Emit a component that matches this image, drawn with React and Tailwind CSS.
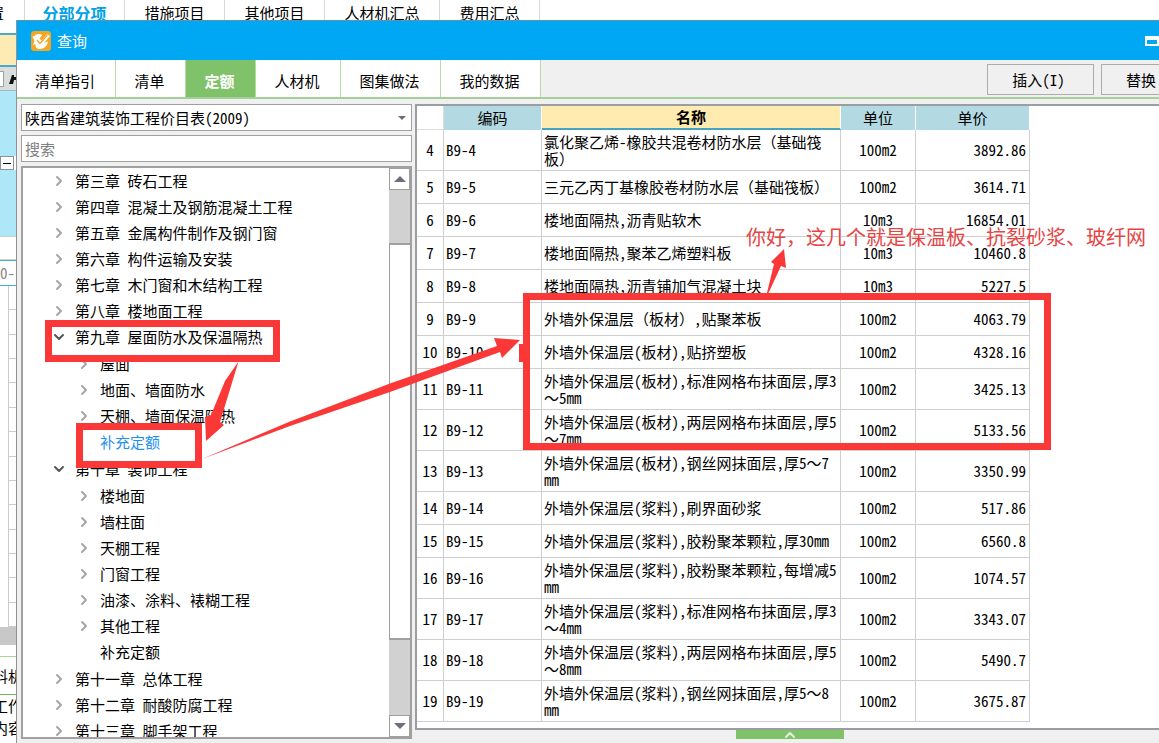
import clsx from 'clsx'
import { ChevronRight, ChevronDown, ChevronUp } from 'lucide-react'

const mainTabs = [
  { label: '分部分项', width: 'w-[100px]', active: true },
  { label: '措施项目', width: 'w-[100px]' },
  { label: '其他项目', width: 'w-[100px]' },
  { label: '人材机汇总', width: 'w-[115px]' },
  { label: '费用汇总', width: 'w-[100px]' },
]

const queryTabs = [
  { label: '清单指引', width: 'w-[99px]' },
  { label: '清单', width: 'w-[70px]' },
  { label: '定额', width: 'w-[70px]', active: true },
  { label: '人材机', width: 'w-[85px]' },
  { label: '图集做法', width: 'w-[100px]' },
  { label: '我的数据', width: 'w-[100px]' },
]

const chapters = [
  { title: '第三章 砖石工程' },
  { title: '第四章 混凝土及钢筋混凝土工程' },
  { title: '第五章 金属构件制作及钢门窗' },
  { title: '第六章 构件运输及安装' },
  { title: '第七章 木门窗和木结构工程' },
  { title: '第八章 楼地面工程' },
  {
    title: '第九章 屋面防水及保温隔热',
    children: [
      { title: '屋面' },
      { title: '地面、墙面防水' },
      { title: '天棚、墙面保温隔热' },
      { title: '补充定额', leaf: true, selected: true },
    ],
  },
  {
    title: '第十章 装饰工程',
    children: [
      { title: '楼地面' },
      { title: '墙柱面' },
      { title: '天棚工程' },
      { title: '门窗工程' },
      { title: '油漆、涂料、裱糊工程' },
      { title: '其他工程' },
      { title: '补充定额', leaf: true },
    ],
  },
  { title: '第十一章 总体工程' },
  { title: '第十二章 耐酸防腐工程' },
  { title: '第十三章 脚手架工程' },
]

const items = [
  { no: 4, name: '氯化聚乙烯-橡胶共混卷材防水层（基础筏\n板）', unit: '100m2', price: '3892.86' },
  { no: 5, name: '三元乙丙丁基橡胶卷材防水层（基础筏板）', unit: '100m2', price: '3614.71' },
  { no: 6, name: '楼地面隔热,沥青贴软木', unit: '10m3', price: '16854.01' },
  { no: 7, name: '楼地面隔热,聚苯乙烯塑料板', unit: '10m3', price: '10460.8' },
  { no: 8, name: '楼地面隔热,沥青铺加气混凝土块', unit: '10m3', price: '5227.5' },
  { no: 9, name: '外墙外保温层（板材）,贴聚苯板', unit: '100m2', price: '4063.79' },
  { no: 10, name: '外墙外保温层(板材),贴挤塑板', unit: '100m2', price: '4328.16' },
  { no: 11, name: '外墙外保温层(板材),标准网格布抹面层,厚3\n～5mm', unit: '100m2', price: '3425.13' },
  { no: 12, name: '外墙外保温层(板材),两层网格布抹面层,厚5\n～7mm', unit: '100m2', price: '5133.56' },
  { no: 13, name: '外墙外保温层(板材),钢丝网抹面层,厚5～7\nmm', unit: '100m2', price: '3350.99' },
  { no: 14, name: '外墙外保温层(浆料),刷界面砂浆', unit: '100m2', price: '517.86' },
  { no: 15, name: '外墙外保温层(浆料),胶粉聚苯颗粒,厚30mm', unit: '100m2', price: '6560.8' },
  { no: 16, name: '外墙外保温层(浆料),胶粉聚苯颗粒,每增减5\nmm', unit: '100m2', price: '1074.57' },
  { no: 17, name: '外墙外保温层(浆料),标准网格布抹面层,厚3\n～4mm', unit: '100m2', price: '3343.07' },
  { no: 18, name: '外墙外保温层(浆料),两层网格布抹面层,厚5\n～8mm', unit: '100m2', price: '5490.7' },
  { no: 19, name: '外墙外保温层(浆料),钢丝网抹面层,厚5～8\nmm', unit: '100m2', price: '3675.87' },
]

function MainWindow() {
  return (
    <div className="flex h-full flex-col">
      <nav className="flex h-[33px] shrink-0">
        <span className="flex h-[26px] w-[25px] items-center justify-end overflow-hidden border-r border-[#d8d8d8]">
          <span className="mr-5">置</span>
        </span>
        {mainTabs.map((tab) => (
          <button
            key={tab.label}
            className={clsx(
              'h-[26px] shrink-0 border-r border-[#d8d8d8]',
              tab.width,
              tab.active && 'text-base font-bold text-[#00a2e8]'
            )}
          >
            {tab.label}
          </button>
        ))}
      </nav>
      <div className="flex w-4 flex-1 flex-col overflow-hidden whitespace-nowrap">
        <div className="h-[34px] shrink-0 border-y-2 border-[#4ba7cb] bg-[#fdebb3]" />
        <div className="flex h-[23px] shrink-0 items-center gap-1 bg-[#d9dedc]">
          <div className="h-4 w-1 shrink-0 border border-l-0 border-[#a0a0a0] bg-white" />
          <svg viewBox="0 0 12 12" className="size-3 shrink-0">
            <path d="M1 11 4 2h2v2h2V2h2l3 9H8V7H6L5 11z" fill="#111" />
          </svg>
        </div>
        <div className="h-[66px] shrink-0 border-t border-[#9bbcc6] bg-[#aee7f8]" />
        <div className="flex size-[14px] shrink-0 items-center justify-center border border-[#8a9498] bg-white">
          <div className="h-px w-2 bg-black" />
        </div>
        <div className="h-[66px] shrink-0 bg-[#aee7f8]" />
        <div className="h-6 shrink-0 border-y border-[#cfcfcf]" />
        <div className="flex h-[26px] shrink-0 items-center border-y border-[#45b2cf] text-[#888]">0-</div>
        <div className="flex flex-1 flex-col pl-2">
          {Array.from({ length: 14 }, (_, i) => (
            <div key={i} className="flex-1 border-b border-l border-[#cccccc]" />
          ))}
        </div>
        <div className="h-[18px] shrink-0 bg-[#c8c8c8]" />
        <div className="h-3 shrink-0 border-b border-[#a9d79a]" />
        <div className="flex h-[38px] shrink-0 items-center justify-center border-b border-[#6dbb62]">料机</div>
        <div className="flex h-[48px] shrink-0 flex-col items-center leading-[22px]">
          <span>工作</span>
          <span>内容</span>
          <span>特征</span>
        </div>
      </div>
    </div>
  )
}

function TitleBar() {
  return (
    <header className="flex h-10 shrink-0 items-center border-t border-[#5d93ad] bg-[#00a8f3] pl-[14px] text-white">
      <svg viewBox="0 0 20 20" className="size-5">
        <rect width="20" height="20" rx="3" fill="#f5a623" />
        <path
          d="M1.500 5.500C4 5 5 3 8 3c1.500 0 2.500.5 3 1.500L8.500 7.500l2 2L16 3l3 2-6 7 4-1.500c-.5 4-3.500 7-7.500 7.500-3.500.3-5.500-2-5-5L2 14l1.500-4z"
          fill="#fff"
        />
        <path d="m6 9 3 3.500L16.500 4" fill="none" stroke="#f5a623" strokeWidth="1.200" />
      </svg>
      <h1 className="ml-[6px]">查询</h1>
      <button aria-label="最小化" className="ml-auto h-[10px] w-[14px] border-2 border-t-4 border-white" />
    </header>
  )
}

function Toolbar() {
  return (
    <div className="flex h-[39px] shrink-0 border-b-2 border-[#a5cf98]">
      {queryTabs.map((tab) => (
        <button
          key={tab.label}
          className={clsx(
            'shrink-0 border-r border-[#b5dba8] pt-1 pr-[2px]',
            tab.width,
            tab.active ? 'bg-[#7fc269] font-bold text-white' : 'bg-white'
          )}
        >
          {tab.label}
        </button>
      ))}
      <div className="ml-auto flex gap-[7px] pt-1">
        <button className="h-[31px] w-[107px] border border-[#adadad] bg-[#f0f0f0] pr-1">插入(I)</button>
        <button className="h-[31px] w-[58px] border border-r-0 border-[#adadad] bg-[#f0f0f0] pl-6 text-left whitespace-nowrap">
          替换
        </button>
      </div>
    </div>
  )
}

function TreeRow({ node, open, nested }) {
  const Arrow = open ? ChevronDown : ChevronRight
  return (
    <div className={clsx('flex h-[26px] items-center', nested ? 'pl-[53px]' : 'pl-7')}>
      <span className="w-6">
        {!node.leaf && <Arrow size={16} strokeWidth={3} className={open ? 'text-[#555]' : 'text-[#a6a6a6]'} />}
      </span>
      <span className={clsx('whitespace-nowrap', node.selected && 'text-[#1e90f0]')}>{node.title}</span>
    </div>
  )
}

function ScrollBar() {
  return (
    <div className="flex w-[21px] shrink-0 flex-col bg-[#d1d1d1]">
      <button aria-label="向上滚动" className="flex h-[22px] items-center justify-center border border-[#a0a0a0] bg-white">
        <svg viewBox="0 0 12 6" className="h-[6px] w-3">
          <path d="M0 6 6 0l6 6z" fill="#6b6f7d" />
        </svg>
      </button>
      <div className="flex-[54]" />
      <div className="flex-[396] border-y-2 border-l border-[#a0a0a0] bg-white" />
      <div className="flex-[76]" />
      <button aria-label="向下滚动" className="flex h-[22px] items-center justify-center border border-[#a0a0a0] bg-white">
        <svg viewBox="0 0 12 6" className="h-[6px] w-3">
          <path d="M0 0h12L6 6z" fill="#6b6f7d" />
        </svg>
      </button>
    </div>
  )
}

function Sidebar() {
  return (
    <aside className="flex w-[391px] shrink-0 flex-col gap-1 pb-1">
      <div className="relative h-[27px] shrink-0">
        <select aria-label="定额库" className="h-full w-full appearance-none border border-[#a0a0a0] bg-white pl-[3px]">
          <option>陕西省建筑装饰工程价目表(2009)</option>
        </select>
        <svg viewBox="0 0 8 4" className="pointer-events-none absolute top-3 right-[6px] h-1 w-2">
          <path d="M0 0h8L4 4z" fill="#6b6f7d" />
        </svg>
      </div>
      <input
        type="text"
        aria-label="搜索"
        placeholder="搜索"
        className="h-[27px] shrink-0 border border-[#a0a0a0] bg-white pl-[3px] placeholder:text-[#808080]"
      />
      <div className="flex min-h-0 flex-1 border-2 border-[#a0a0a0] bg-white">
        <ul className="min-w-0 flex-1 overflow-hidden">
          {chapters.map((chapter) => (
            <li key={chapter.title}>
              <TreeRow node={chapter} open={!!chapter.children} />
              {chapter.children && (
                <ul className="py-px">
                  {chapter.children.map((child) => (
                    <li key={child.title}>
                      <TreeRow node={child} nested />
                    </li>
                  ))}
                </ul>
              )}
            </li>
          ))}
        </ul>
        <ScrollBar />
      </div>
    </aside>
  )
}

// latin glyphs are half width, but these marks have to keep the full cell
function ItemName({ text }) {
  return text.split(/([（）～])/).map((part, i) =>
    i % 2 ? (
      <span key={i} className="[font-feature-settings:normal]">
        {part}
      </span>
    ) : (
      part
    )
  )
}

function PriceTable() {
  const head = 'border-r border-white bg-[#b3d9e3] font-normal'
  const cell = 'border-r border-b border-[#cfcfcf] pb-px'
  return (
    <table className="w-[613px] table-fixed border-separate border-spacing-0">
      <thead>
        <tr className="h-6">
          <th className="w-[27px] border-r border-b border-[#dcdcdc]" />
          <th className={clsx(head, 'w-[98px]')}>编码</th>
          <th className="w-[299px] border-r border-b-2 border-r-white border-b-[#45a5c0] bg-[#ffebb0] font-bold">名称</th>
          <th className={clsx(head, 'w-[75px]')}>单位</th>
          <th className={clsx(head, 'w-[114px]')}>单价</th>
        </tr>
      </thead>
      <tbody className="leading-[17px]">
        {items.map((item) => (
          <tr key={item.no} className={item.name.includes('\n') ? 'h-[41px]' : 'h-[33px]'}>
            <td className={clsx(cell, 'text-center')}>{item.no}</td>
            <td className={clsx(cell, 'pl-[2px]')}>B9-{item.no}</td>
            <td className={clsx(cell, 'pl-[2px] whitespace-pre')}>
              <ItemName text={item.name} />
            </td>
            <td className={clsx(cell, 'text-center')}>{item.unit}</td>
            <td className={clsx(cell, 'pr-[3px] text-right')}>{item.price}</td>
          </tr>
        ))}
      </tbody>
    </table>
  )
}

function QueryDialog() {
  return (
    <section className="absolute top-5 right-0 bottom-0 left-4 flex flex-col overflow-hidden border-l border-[#8c9499] bg-[#f0f0f0]">
      <TitleBar />
      <Toolbar />
      <div className="flex min-h-0 flex-1 gap-[3px] pt-[5px] pl-1">
        <Sidebar />
        <div className="flex min-w-0 flex-1 flex-col">
          <div className="min-h-0 flex-1 overflow-hidden border-2 border-r-0 border-[#9a9ea3] bg-white">
            <PriceTable />
          </div>
          <div className="flex h-[13px] shrink-0 justify-center pl-[6px]">
            <button
              aria-label="展开"
              className="flex h-[9px] w-[108px] items-center justify-center overflow-hidden bg-[#7fc269] text-[#e4f5dd]"
            >
              <ChevronUp size={16} strokeWidth={3} />
            </button>
          </div>
        </div>
      </div>
    </section>
  )
}

// red marker notes drawn over the window
function Annotations() {
  return (
    <div className="pointer-events-none absolute inset-0 overflow-hidden">
      <div className="absolute top-[320px] left-[45px] h-[42px] w-[235px] border-[7px] border-[#fb3838]" />
      <div className="absolute top-[423px] left-[76px] h-[45px] w-[126px] border-[7px] border-[#fb3838]" />
      <div className="absolute top-[293px] left-[523px] h-[157px] w-[528px] border-[7px] border-[#fb3838]" />
      <svg width="1159" height="743" viewBox="0 0 1159 743" className="absolute top-0 left-0" fill="#fb3838">
        <path d="M238.500 361.500 225 381 211 415 205 417 206 441 224 425 220 422z" />
        <path d="M202 459 290 421.500 390 383.500 497 346 494 338 520 340 502 358 500 352 390 392 290 426z" />
        <path d="M765 301 774 264 771 262 784 249 786 268 781 266 768 294z" />
        <path d="M519 344h5v18h-5z" />
      </svg>
      <p className="absolute top-[225px] left-[746px] text-xl leading-6 whitespace-nowrap text-[#e64545] [font-feature-settings:normal]">
        你好，这几个就是保温板、抗裂砂浆、玻纤网
      </p>
    </div>
  )
}

export default function App() {
  return (
    <main className="relative h-screen overflow-hidden bg-white font-['Noto_Sans_CJK_SC',sans-serif] text-[15px] leading-5 text-black [font-feature-settings:'hwid']">
      <MainWindow />
      <QueryDialog />
      <Annotations />
    </main>
  )
}
